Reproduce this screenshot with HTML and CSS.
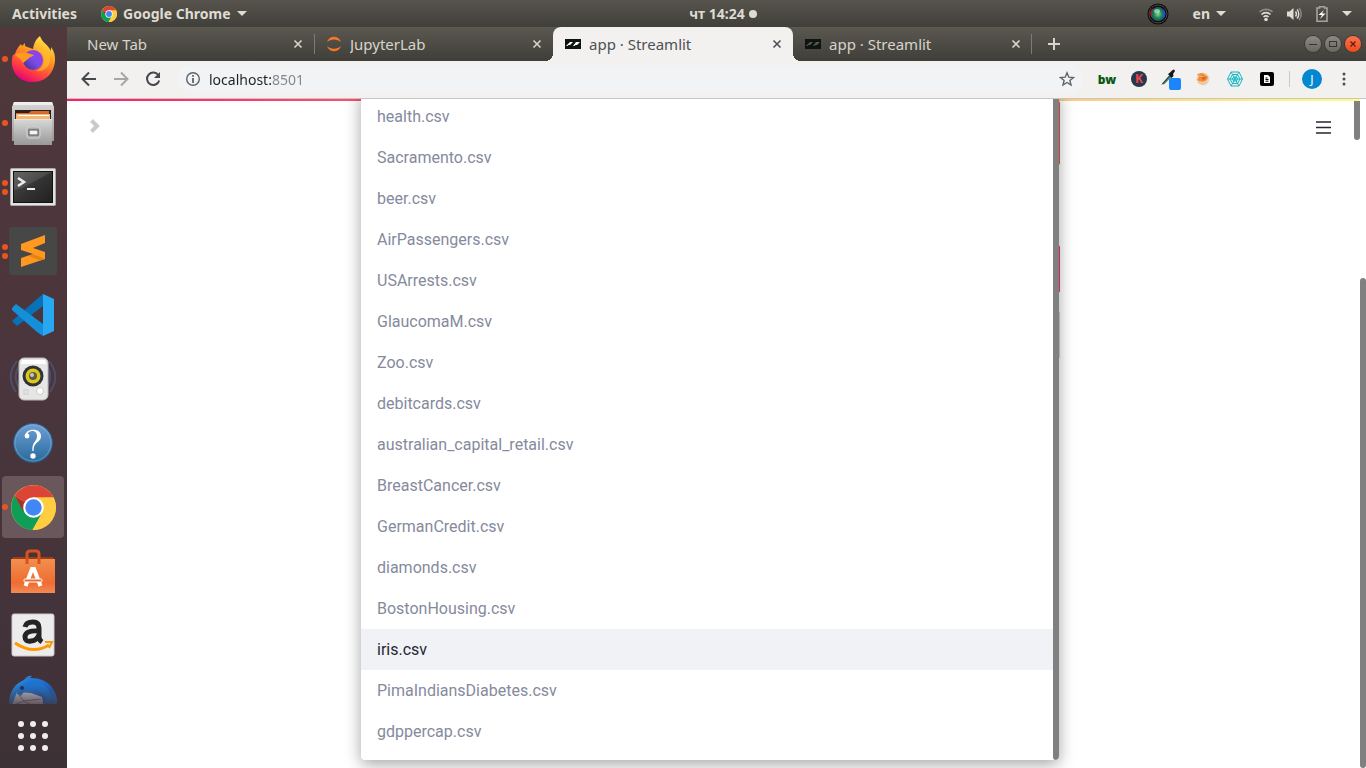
FILE: index.html
```html
<!DOCTYPE html>
<html lang="en">
<head>
<meta charset="utf-8">
<title>app · Streamlit</title>
<link rel="stylesheet" href="styles.css">
</head>
<body>
<svg class="defs" aria-hidden="true">
  <defs>
    <linearGradient id="ffBody" x1="0.8" y1="0" x2="0.3" y2="1"><stop offset="0" stop-color="#fff44f"/><stop offset=".4" stop-color="#ff9a1f"/><stop offset=".75" stop-color="#ff4040"/><stop offset="1" stop-color="#e6007a"/></linearGradient>
    <linearGradient id="ffGlobe" x1="1" y1="0" x2="0" y2="1"><stop offset="0" stop-color="#a03af0"/><stop offset=".5" stop-color="#7a4be8"/><stop offset="1" stop-color="#3d2a8c"/></linearGradient>
    <linearGradient id="metal" x1="0" y1="0" x2="0" y2="1"><stop offset="0" stop-color="#d8d8d8"/><stop offset="1" stop-color="#989898"/></linearGradient>
    <linearGradient id="screen" x1="0" y1="0" x2="1" y2="1"><stop offset="0" stop-color="#555"/><stop offset=".5" stop-color="#333"/><stop offset="1" stop-color="#202020"/></linearGradient>
    <linearGradient id="helpBlue" x1="0" y1="0" x2="0" y2="1"><stop offset="0" stop-color="#6f9fd6"/><stop offset="1" stop-color="#276a9c"/></linearGradient>
    <linearGradient id="bag" x1="0" y1="0" x2="0" y2="1"><stop offset="0" stop-color="#f0904f"/><stop offset=".7" stop-color="#f06c30"/><stop offset="1" stop-color="#f58a56"/></linearGradient>
    <linearGradient id="bird" x1="0" y1="0" x2="1" y2="1"><stop offset="0" stop-color="#2f8fe0"/><stop offset=".6" stop-color="#1d5fc0"/><stop offset="1" stop-color="#1a9ad8"/></linearGradient>
    <radialGradient id="lens" cx=".5" cy=".5" r=".5"><stop offset="0" stop-color="#8ad8a0"/><stop offset=".55" stop-color="#178a50"/><stop offset=".85" stop-color="#1a5f60"/><stop offset="1" stop-color="#301030"/></radialGradient>
    <symbol id="chrome" viewBox="0 0 44 44">
      <circle cx="22" cy="22" r="22" fill="#ffcd40"/>
      <path d="M22 22 3.500 10.500A22 22 0 0 1 41.500 12H22Z" fill="#db4437"/>
      <path d="M3.500 10.500A22 22 0 0 0 21 44L31 26 22 22 13 26Z" fill="#0f9d58"/>
      <path d="M21 44 31 27A10 10 0 0 0 31 18L41.500 12A22 22 0 0 1 21 44Z" fill="#ffcd40"/>
      <path d="M3.500 10.500 12 26 14 17Z" fill="#a5332a"/>
      <circle cx="22" cy="22" r="10" fill="#fff"/>
      <circle cx="22" cy="22" r="8" fill="#4285f4"/>
    </symbol>
    <symbol id="streamlit" viewBox="0 0 16 10">
      <rect width="16" height="10" fill="#0e1410"/>
      <path d="M1 7 5 3H8L5 6H3.500L2.500 7ZM8 7 11 3H15L12 6H10.500L9.500 7Z" fill="currentColor"/>
    </symbol>
    <symbol id="cross" viewBox="0 0 16 16"><path d="M4.500 4.500 11.500 11.500M11.500 4.500 4.500 11.500" stroke="currentColor" stroke-width="1.600" fill="none"/></symbol>
  </defs>
</svg>

<header class="topbar">
  <div class="topbar-side">
    <button class="top-item" type="button">Activities</button>
    <button class="top-item app-menu" type="button"><svg width="16" height="16"><use href="#chrome"/></svg>Google Chrome<i class="caret"></i></button>
  </div>
  <button class="top-item clock" type="button">чт 14:24<i class="dot"></i></button>
  <div class="topbar-side tray">
    <svg width="22" height="22" viewBox="0 0 22 22"><circle cx="11" cy="11" r="10.500" fill="#0a0a0a"/><circle cx="11" cy="11" r="9" fill="none" stroke="#4a4a4a"/><circle cx="11" cy="11" r="7.500" fill="url(#lens)"/><path d="M16 7a7 7 0 0 1 0 8" stroke="#264dd8" stroke-width="2" fill="none"/><path d="M6 6a7 7 0 0 0-1 8" stroke="#a3262c" stroke-width="1.500" fill="none"/><ellipse cx="10" cy="8" rx="3" ry="2" fill="#d0f0c8" opacity=".6"/></svg>
    <button class="top-item lang" type="button">en<i class="caret"></i></button>
    <button class="top-item status" type="button" aria-label="System status">
      <svg width="16" height="16" viewBox="0 0 16 16" fill="none" stroke-width="1.700"><path d="M1.500 6a9.500 9.500 0 0 1 13 0" stroke="#8d8b85"/><path d="M3.500 8.500a6.500 6.500 0 0 1 9 0M5.500 11a3.600 3.600 0 0 1 5 0" stroke="#dfdbd2"/><circle cx="8" cy="13.500" r="1.800" fill="#dfdbd2"/></svg>
      <svg width="16" height="16" viewBox="0 0 16 16" fill="none" stroke-width="1.400"><path d="M1 5.500h2.500L7.500 2v12L3.500 10.500H1Z" fill="#dfdbd2"/><path d="M9.500 5.500a4 4 0 0 1 0 5M11 3.500a6.500 6.500 0 0 1 0 9" stroke="#dfdbd2"/><path d="M13 2a9 9 0 0 1 0 12" stroke="#8d8b85"/></svg>
      <svg width="16" height="16" viewBox="0 0 16 16"><path d="M5.500 2V.8h5V2H13v13.200H3V2Z" fill="none" stroke="#a5a39c" stroke-width="1.600"/><path d="M10 4 4.500 9H8L6 13 11.500 7.500H8Z" fill="#fff"/></svg>
      <i class="caret"></i>
    </button>
  </div>
</header>

<div class="desktop">
  <nav class="dock" aria-label="Dock">
    <div class="dock-apps">
      <button class="dock-item" type="button" aria-label="Firefox"><span class="pips"><i></i></span>
        <svg width="46" height="48" viewBox="0 0 46 48"><path d="M30 1C24 6 24 10 23 14 20 13 17 12 15 11L15 8 12 11 11 9C8 12 6 15 5 19L3 20C-1 31 5 47 23 47 38 47 45 35 45 24 45 18 43 15 41 12L41 16C38 9 32 8 30 1Z" fill="url(#ffBody)"/><circle cx="23" cy="25" r="10" fill="url(#ffGlobe)"/><path d="M5 19C9 17 14 18 17 18L24 20C22 22 19 22 18 24L13 28C10 22 6 22 5 19Z" fill="#ff9a20"/><path d="M27 15C36 17 37 32 26 36 36 38 44 27 38 17 35 13 30 13 27 15Z" fill="#ffbe2c" opacity=".7"/></svg></button>
      <button class="dock-item" type="button" aria-label="Files"><span class="pips"><i></i></span>
        <svg width="44" height="46" viewBox="0 0 44 46"><path d="M3 2H41L43 7V41H1V7Z" fill="url(#metal)"/><path d="M3 2H41L42 5H2Z" fill="#eee"/><rect x="4" y="10" width="36" height="10" fill="#2b211d"/><path d="M5 13H18L20 11H38V19H5Z" fill="#d9682c"/><rect x="5" y="14" width="34" height="5" fill="#f6b870"/><rect x="7" y="15" width="31" height="1" fill="#fff"/><path d="M3 19H41V45H3Z" fill="url(#metal)"/><path d="M3 19.500H41" stroke="#e4e4e4"/><rect x="16" y="27" width="13" height="11" rx="2" fill="#aaa" stroke="#d5d5d5"/><rect x="18" y="30" width="9" height="5" fill="#f4f4f4" stroke="#555"/></svg></button>
      <button class="dock-item" type="button" aria-label="Terminal"><span class="pips"><i></i><i></i></span>
        <svg width="46" height="38" viewBox="0 0 46 38"><rect x=".5" y=".5" width="45" height="37" rx="1" fill="#e2e2e0" stroke="#aaa"/><rect x="3.500" y="3.500" width="39" height="31" fill="url(#screen)" stroke="#111"/><path d="M4 4H42L12 20 4 22Z" fill="#fff" opacity=".1"/><path d="M8 10 14 14 8 18" fill="none" stroke="#eee" stroke-width="2.500"/><path d="M17 21H25" stroke="#eee" stroke-width="2"/></svg></button>
      <button class="dock-item" type="button" aria-label="Sublime Text"><span class="pips"><i></i><i></i></span>
        <svg width="48" height="48" viewBox="0 0 48 48"><rect width="48" height="48" rx="3" fill="#474747"/><path d="M12 17 36 8V16L24 21 36 25V32L12 40V31L24 27 12 23Z" fill="#ff9820"/><path d="M24 27 36 32 31 33.500 20 29Z" fill="#e58312"/></svg></button>
      <button class="dock-item" type="button" aria-label="Visual Studio Code">
        <svg width="44" height="44" viewBox="0 0 44 44"><path d="M1 28 6 33 32 13V1L26 6Z" fill="#0871b8"/><path d="M1 15 5 11 32 31V43L26 39 1 17Z" fill="#1590d8"/><path d="M32 1 43 6V38L32 43Z" fill="#28a8f2"/></svg></button>
      <button class="dock-item" type="button" aria-label="Rhythmbox">
        <svg width="48" height="46" viewBox="0 0 48 46"><g fill="none" stroke="#4d6795" stroke-width="2" opacity=".5"><path d="M8 5Q-4 20 7 36M12 7Q2 20 11 33M40 5Q52 20 41 36M36 7Q46 20 37 33"/></g><rect x="10" y="2" width="29" height="42" rx="5" fill="#e6e6e4" stroke="#b9b9b5"/><path d="M13 4H36L37 8H12Z" fill="#fff"/><circle cx="24" cy="20" r="10.500" fill="#30333a"/><circle cx="24" cy="20" r="7.500" fill="#dcc71b"/><circle cx="24" cy="20" r="4" fill="#625d38"/><circle cx="23" cy="19" r="2" fill="#bbc8da"/><circle cx="31" cy="35" r="3.500" fill="#fff" stroke="#ccc"/><rect x="15" y="34" width="4" height="4" fill="none" stroke="#ccc"/></svg></button>
      <button class="dock-item" type="button" aria-label="Help">
        <svg width="42" height="42" viewBox="0 0 42 42"><circle cx="21" cy="21" r="19.500" fill="url(#helpBlue)" stroke="#285c85"/><circle cx="21" cy="21" r="18" fill="none" stroke="#91b8dc" opacity=".5"/><path d="M13 15C12 6 29 5 29 14 29 21 21.500 19 21.700 29H20.300C20 19 25 20 25 14 25 8 18 8 16 11Z" fill="#fff"/><circle cx="15" cy="14" r="2.400" fill="#fff"/><circle cx="21" cy="34" r="2.700" fill="#fff"/></svg></button>
      <button class="dock-item current" type="button" aria-label="Google Chrome"><span class="pips"><i></i></span><svg width="45" height="45"><use href="#chrome"/></svg></button>
      <button class="dock-item" type="button" aria-label="Ubuntu Software">
        <svg width="44" height="46" viewBox="0 0 44 46"><path d="M2 9H42L44 13H0Z" fill="#a43b12"/><path d="M0 11H44V45H0Z" fill="url(#bag)"/><path d="M16 16V6Q16 3 19 3H25Q28 3 28 6V16" fill="none" stroke="#d65320" stroke-width="3"/><path d="M14.500 38 21 21H23L29.500 38" fill="none" stroke="#fff" stroke-width="4"/><rect x="13" y="31" width="18" height="3" rx="1" fill="#ea6c34" stroke="#fff"/></svg></button>
      <button class="dock-item" type="button" aria-label="Amazon">
        <svg width="44" height="44" viewBox="0 0 44 44"><rect x="1" y="1" width="42" height="42" rx="2" fill="#ececec" stroke="#d0c8ca"/><path d="M14 14Q15 9 22 9 28 9 28 15V24Q28 27 31 29M28 18Q14 17 14 24 14 29 20 28 25 28 28 22" fill="none" stroke="#242424" stroke-width="5"/><path d="M4 30Q22 42 38 32" fill="none" stroke="#ff9900" stroke-width="3"/><path d="M34 29 41 29 38 35" fill="none" stroke="#ff9900" stroke-width="2"/></svg></button>
      <button class="dock-item last" type="button" aria-label="Thunderbird">
        <svg width="48" height="48" viewBox="0 0 48 48"><path d="M0 30C0 14 8 8 15 5 17 2 20 0 23 1L21 3C38 2 47 14 48 25 48 40 40 47 25 47 10 47 0 40 0 30Z" fill="url(#bird)"/><path d="M3 30 8 17 22 18 33 22 36 40H5Z" fill="#c4c4d0"/><path d="M5 30 15 26 32 24M8 18 15 26 22 30" stroke="#747487" fill="none"/><path d="M8 18C9 10 18 5 28 6 38 9 44 18 42 32 36 18 27 12 19 15L14 18 12 21Z" fill="#1d74d0"/><circle cx="13" cy="13" r="2" fill="#292e57"/></svg></button>
    </div>
    <button class="dock-grid" type="button" aria-label="Show applications"><i></i><i></i><i></i><i></i><i></i><i></i><i></i><i></i><i></i></button>
  </nav>

  <section class="browser">
    <div class="tabstrip">
      <div class="tab"><span class="tab-title">New Tab</span><button class="close" type="button" aria-label="Close tab"><svg width="16" height="16"><use href="#cross"/></svg></button></div>
      <div class="tab ruled"><svg width="16" height="16" viewBox="0 0 16 16" fill="#f37726"><path d="M1 6C3 -1 13 -1 15 6 11 2.500 5 2.500 1 6Z"/><path d="M1 10C3 17 13 17 15 10 11 13.500 5 13.500 1 10Z"/></svg><span class="tab-title">JupyterLab</span><button class="close" type="button" aria-label="Close tab"><svg width="16" height="16"><use href="#cross"/></svg></button></div>
      <div class="tab active"><svg width="16" height="10"><use href="#streamlit"/></svg><span class="tab-title">app · Streamlit</span><button class="close" type="button" aria-label="Close tab"><svg width="16" height="16"><use href="#cross"/></svg></button></div>
      <div class="tab dim"><svg width="16" height="10"><use href="#streamlit"/></svg><span class="tab-title">app · Streamlit</span><button class="close" type="button" aria-label="Close tab"><svg width="16" height="16"><use href="#cross"/></svg></button></div>
      <button class="new-tab" type="button" aria-label="New tab"><svg width="12" height="12" viewBox="0 0 12 12"><path d="M6 0V12M0 6H12" stroke="currentColor" stroke-width="2"/></svg></button>
      <div class="window-buttons">
        <button type="button" aria-label="Minimize"><svg width="8" height="8" viewBox="0 0 8 8"><path d="M0 4.500H8" stroke="currentColor"/></svg></button>
        <button type="button" aria-label="Maximize"><svg width="8" height="8" viewBox="0 0 8 8"><rect x=".5" y="1.500" width="7" height="5" fill="none" stroke="currentColor"/></svg></button>
        <button class="quit" type="button" aria-label="Close"><svg width="8" height="8" viewBox="0 0 8 8"><path d="M1.500 1.500 6.500 6.500M6.500 1.500 1.500 6.500" stroke="currentColor" stroke-width="1.200"/></svg></button>
      </div>
    </div>

    <div class="toolbar">
      <button class="nav" type="button" aria-label="Back"><svg width="16" height="16" viewBox="0 0 16 16"><path d="M15 8H2M8 1.500 1.500 8 8 14.500" fill="none" stroke="currentColor" stroke-width="2"/></svg></button>
      <button class="nav off" type="button" aria-label="Forward"><svg width="16" height="16" viewBox="0 0 16 16"><path d="M1 8H14M8 1.500 14.500 8 8 14.500" fill="none" stroke="currentColor" stroke-width="2"/></svg></button>
      <button class="nav" type="button" aria-label="Reload"><svg width="16" height="16" viewBox="0 0 16 16"><path d="M13.500 4.500A6.200 6.200 0 1 0 14.200 9.500" fill="none" stroke="currentColor" stroke-width="2"/><path d="M15 1V7H9Z" fill="currentColor"/></svg></button>
      <div class="omnibox">
        <svg width="16" height="16" viewBox="0 0 16 16"><circle cx="8" cy="8" r="6.300" fill="none" stroke="#5f6368" stroke-width="1.400"/><path d="M8 7V12M8 4V5.800" stroke="#5f6368" stroke-width="1.800"/></svg>
        <input class="url" type="text" aria-label="Address" value="localhost:8501">
        <button class="star" type="button" aria-label="Bookmark"><svg width="16" height="16" viewBox="0 0 16 16"><path d="M8 1.800 9.800 6.200 14.500 6.500 10.900 9.500 12 14 8 11.500 4 14 5.100 9.500 1.500 6.500 6.200 6.200Z" fill="none" stroke="#5f6368" stroke-width="1.400"/></svg></button>
      </div>
      <div class="extensions">
        <button class="ext bw" type="button">bw</button>
        <button class="ext kk" type="button">K</button>
        <button class="ext" type="button" aria-label="Color picker"><svg width="20" height="22" viewBox="0 0 20 22"><path d="M1 15.500 8.500 7 10.500 9 3 16.500Z" fill="#4d8466"/><path d="M1 16.500 8.500 8" stroke="#243f32"/><path d="M7 6 8.500 5 10.500 3Q13 0 14 3L12 6 12.500 8 10.500 10Z" fill="#151515"/><rect x="8" y="10" width="12" height="12" rx="2" fill="#1b86fb"/></svg></button>
        <button class="ext" type="button" aria-label="Metamask"><svg width="16" height="16" viewBox="0 0 16 16"><circle cx="8" cy="8" r="6.500" fill="#ecd5c0"/><path d="M2 3 7 2 11 4 13 6 12 9 8 11 4 10 2 9 4 6Z" fill="#f28c38"/><path d="M6 6 9 4 11 6 9 9 7 8Z" fill="#d0661f"/><path d="M3 4 7 6 12 4M3 11 8 13 12 11" stroke="#ffb470" fill="none"/></svg></button>
        <button class="ext" type="button" aria-label="Web"><svg width="16" height="16" viewBox="0 0 16 16" fill="none" stroke="#17b6c4"><path d="M4 1H12L15.500 8 12 15H4L.5 8ZM5.500 3.500H10.500L13 8 10.500 12.500H5.500L3 8ZM6.500 6H9.500L10.500 8 9.500 10H6.500L5.500 8ZM4 1 12 15M12 1 4 15M1 8H15"/></svg></button>
        <button class="ext" type="button" aria-label="Reader"><svg width="14" height="14" viewBox="0 0 14 14"><rect width="14" height="14" rx="2" fill="#000"/><path d="M4 3H8L10 5V11H4Z" fill="#fff"/><path d="M5.500 6H7.500M5.500 7.500H8.500M5.500 9.200H8.500" stroke="#000"/></svg></button>
      </div>
      <span class="divider"></span>
      <button class="avatar" type="button">J</button>
      <button class="more" type="button" aria-label="More"><svg width="4" height="14" viewBox="0 0 4 14" fill="#4c4f52"><circle cx="2" cy="2" r="1.500"/><circle cx="2" cy="7" r="1.500"/><circle cx="2" cy="12" r="1.500"/></svg></button>
    </div>

    <main class="page">
      <div class="decoration"></div>
      <button class="expand" type="button" aria-label="Open sidebar"><svg width="12" height="14" viewBox="0 0 12 14"><path d="M2.500 1.500 8 7 2.500 12.500" fill="none" stroke="#c9cacc" stroke-width="4"/></svg></button>
      <button class="burger" type="button" aria-label="Menu"><svg width="15" height="13" viewBox="0 0 15 13"><path d="M0 1H15M0 6.500H15M0 12H15" stroke="#262730" stroke-width="1.700"/></svg></button>
      <div class="column">
        <div class="block banner"></div>
        <div class="block select-focus"></div>
        <div class="block outline"></div>
        <div class="menu">
          <ul class="options" role="listbox" aria-label="Select a file">
            <li><button type="button" role="option">health.csv</button></li>
            <li><button type="button" role="option">Sacramento.csv</button></li>
            <li><button type="button" role="option">beer.csv</button></li>
            <li><button type="button" role="option">AirPassengers.csv</button></li>
            <li><button type="button" role="option">USArrests.csv</button></li>
            <li><button type="button" role="option">GlaucomaM.csv</button></li>
            <li><button type="button" role="option">Zoo.csv</button></li>
            <li><button type="button" role="option">debitcards.csv</button></li>
            <li><button type="button" role="option">australian_capital_retail.csv</button></li>
            <li><button type="button" role="option">BreastCancer.csv</button></li>
            <li><button type="button" role="option">GermanCredit.csv</button></li>
            <li><button type="button" role="option">diamonds.csv</button></li>
            <li><button type="button" role="option">BostonHousing.csv</button></li>
            <li><button class="highlighted" type="button" role="option" aria-selected="true">iris.csv</button></li>
            <li><button type="button" role="option">PimaIndiansDiabetes.csv</button></li>
            <li><button type="button" role="option">gdppercap.csv</button></li>
          </ul>
          <span class="menu-thumb"></span>
        </div>
      </div>
      <span class="thumb inner"></span>
      <span class="thumb outer"></span>
    </main>
  </section>
</div>
</body>
</html>
```
FILE: styles.css
```css
* { box-sizing: border-box; }

body {
  margin: 0;
  height: 100vh;
  display: flex;
  flex-direction: column;
  overflow: hidden;
  font-family: "Noto Sans", "Open Sans", sans-serif;
  font-size: 14px;
}

button {
  font: inherit;
  color: inherit;
  background: none;
  border: 0;
  padding: 0;
  margin: 0;
}

svg { display: block; flex: none; }
.defs { position: absolute; width: 0; height: 0; }

/* System bar */
.topbar {
  flex: none;
  height: 27px;
  display: flex;
  align-items: center;
  background: linear-gradient(#56544c, #403f3a);
  color: #dfdbd2;
  font-weight: 700;
}
.topbar-side { flex: 1; display: flex; align-items: center; padding-left: 12px; }
.top-item { display: flex; align-items: center; }
.app-menu { margin-left: 24px; gap: 6px; }
.caret { border: 5px solid transparent; border-top-color: currentColor; border-bottom: 0; }
.clock { gap: 4px; margin-left: 94px; }
.dot { width: 8px; height: 8px; border-radius: 50%; background: currentColor; }
.tray { justify-content: flex-end; padding-right: 14px; }
.lang { gap: 6px; margin-left: 24px; }
.status { gap: 12px; margin-left: 32px; }

/* Launcher */
.desktop { flex: 1; min-height: 0; display: flex; }
.dock {
  flex: none;
  width: 67px;
  display: flex;
  flex-direction: column;
  background: linear-gradient(#50383c, #4a353c 50%, #43333a 80%, #3c3135);
}
.dock-apps { flex: 1; min-height: 0; overflow: hidden; display: flex; flex-direction: column; }
.dock-item {
  position: relative;
  flex: none;
  width: 62px;
  height: 62px;
  margin: 1px 2px;
  border-radius: 4px;
  display: grid;
  place-items: center;
}
.dock-item.current { background: #69575c; }
.dock-item.last svg { -webkit-mask-image: linear-gradient(#000 20%, transparent 75%); mask-image: linear-gradient(#000 20%, transparent 75%); }
.pips { position: absolute; left: 0; top: 0; height: 100%; display: flex; flex-direction: column; justify-content: center; gap: 3px; }
.pips i { width: 6px; height: 6px; border-radius: 50%; background: #e95420; }
.dock-grid {
  flex: none;
  width: 66px;
  height: 64px;
  display: grid;
  grid-template-columns: repeat(3, 6px);
  gap: 6px;
  place-content: center;
}
.dock-grid i { width: 6px; height: 6px; border-radius: 50%; background: #eeeeec; }

/* Browser chrome */
.browser { flex: 1; min-width: 0; display: flex; flex-direction: column; }
.tabstrip {
  flex: none;
  height: 34px;
  padding-left: 8px;
  display: flex;
  align-items: stretch;
  background: linear-gradient(#5b5850, #3f3e39);
  color: #d8d4cb;
}
.tab {
  position: relative;
  flex: 0 1 239px;
  min-width: 0;
  padding: 0 8px 0 12px;
  display: flex;
  align-items: center;
  gap: 8px;
}
.tab-title { flex: 1; white-space: nowrap; overflow: hidden; font-size: 15px; line-height: 20px; }
.ruled::before, .dim::after {
  content: "";
  position: absolute;
  top: 7px;
  bottom: 7px;
  width: 1px;
  background: #7d7b73;
}
.ruled::before { left: 0; }
.dim::after { right: 0; }
.dim > svg { color: #55584f; }
.tab.active { flex-basis: 240px; background: #f2f1f0; color: #4d5056; border-radius: 8px 8px 0 0; }
.tab.active > svg { color: #fff; }
.tab.active::before, .tab.active::after {
  content: "";
  position: absolute;
  bottom: 0;
  width: 8px;
  height: 8px;
}
.tab.active::before { right: 100%; background: radial-gradient(circle at 0 0, transparent 8px, #f2f1f0 8px); }
.tab.active::after { left: 100%; background: radial-gradient(circle at 100% 0, transparent 8px, #f2f1f0 8px); }
.new-tab { width: 44px; display: grid; place-items: center; }
.window-buttons { margin-left: auto; padding-right: 5px; display: flex; align-items: center; gap: 4px; }
.window-buttons button {
  width: 16px;
  height: 16px;
  border-radius: 50%;
  display: grid;
  place-items: center;
  background: linear-gradient(#8b8981, #69675f);
  color: #35342f;
  box-shadow: 0 0 0 1px #3b3a35;
}
.window-buttons .quit { background: linear-gradient(#f97350, #ee4a1c); color: #5a1c08; }

.toolbar {
  flex: none;
  height: 38px;
  padding: 0 20px 1px 14px;
  display: flex;
  align-items: center;
  background: #f2f1f0;
  border-bottom: 1px solid #c6c6c6;
  color: #45484c;
}
.nav { margin-right: 16px; }
.nav.off { color: #a5a6a8; }
.omnibox {
  flex: 1;
  height: 28px;
  margin-right: 14px;
  padding: 0 8px;
  border-radius: 14px;
  display: flex;
  align-items: center;
  gap: 8px;
  background: #f1f3f4;
}
.url {
  flex: 1;
  min-width: 0;
  border: 0;
  padding: 0;
  outline: 0;
  font: inherit;
  color: transparent;
  background: linear-gradient(to right, #202124 62px, #80868b 62px);
  background-clip: text;
  -webkit-background-clip: text;
}
.extensions { display: flex; align-items: center; gap: 12px; }
.ext { width: 20px; height: 22px; display: grid; place-items: center; }
.bw { color: #0a5a12; font-weight: 900; font-size: 12px; }
.kk { width: 16px; height: 16px; margin: 0 2px; border-radius: 50%; background: #26384a; color: #ef4550; font-size: 12px; font-weight: 700; line-height: 16px; }
.divider { width: 1px; height: 16px; margin: 0 12px; background: #c9c9c9; }
.avatar { width: 20px; height: 20px; border-radius: 50%; background: #0288d1; color: #fff; font-size: 12px; }
.more { margin-left: 20px; }

/* Page */
.page {
  position: relative;
  flex: 1;
  min-height: 0;
  overflow: hidden;
  padding-right: 12px;
  display: flex;
  justify-content: center;
  background: #fff;
}
.decoration {
  position: absolute;
  top: 0;
  left: 0;
  right: 6px;
  height: 2px;
  background: linear-gradient(to right, #ff1b68, #ffff80);
}
.expand { position: absolute; left: 22px; top: 20px; }
.burger { position: absolute; right: 35px; top: 22px; }
.column { position: relative; width: 100%; max-width: 699px; display: flex; flex-direction: column; }
.block { flex: none; border-radius: 2px; }
.banner { height: 64px; margin-top: 2px; background: #e8563f; }
.select-focus { height: 48px; margin-top: 80px; border: 1px solid #f63366; }
.outline { height: 48px; margin-top: 18px; border: 1px solid #ccd3dc; }
.menu {
  position: absolute;
  top: -8px;
  bottom: 8px;
  left: 0;
  right: 1px;
  border-radius: 4px;
  overflow: clip;
  display: flex;
  align-items: flex-end;
  background: #fff;
  box-shadow: 0 4px 16px rgba(0, 0, 0, .36);
}
.options { flex: 1; margin: 0; padding: 0 0 8px; list-style: none; }
.options button {
  display: block;
  width: 100%;
  height: 41px;
  padding: 0 16px;
  text-align: left;
  font-family: Roboto, sans-serif;
  font-size: 16px;
  color: #858a9d;
}
.options .highlighted { background: #f0f2f6; color: #262730; }
.menu-thumb { flex: none; align-self: stretch; width: 6px; border-radius: 3px; background: #808080; }
.thumb { position: absolute; width: 6px; border-radius: 3px; background: #808080; }
.thumb.inner { right: 6px; top: 2px; height: 39px; border-radius: 0 0 3px 3px; }
.thumb.outer { right: 0; top: 179px; bottom: 0; }
```
